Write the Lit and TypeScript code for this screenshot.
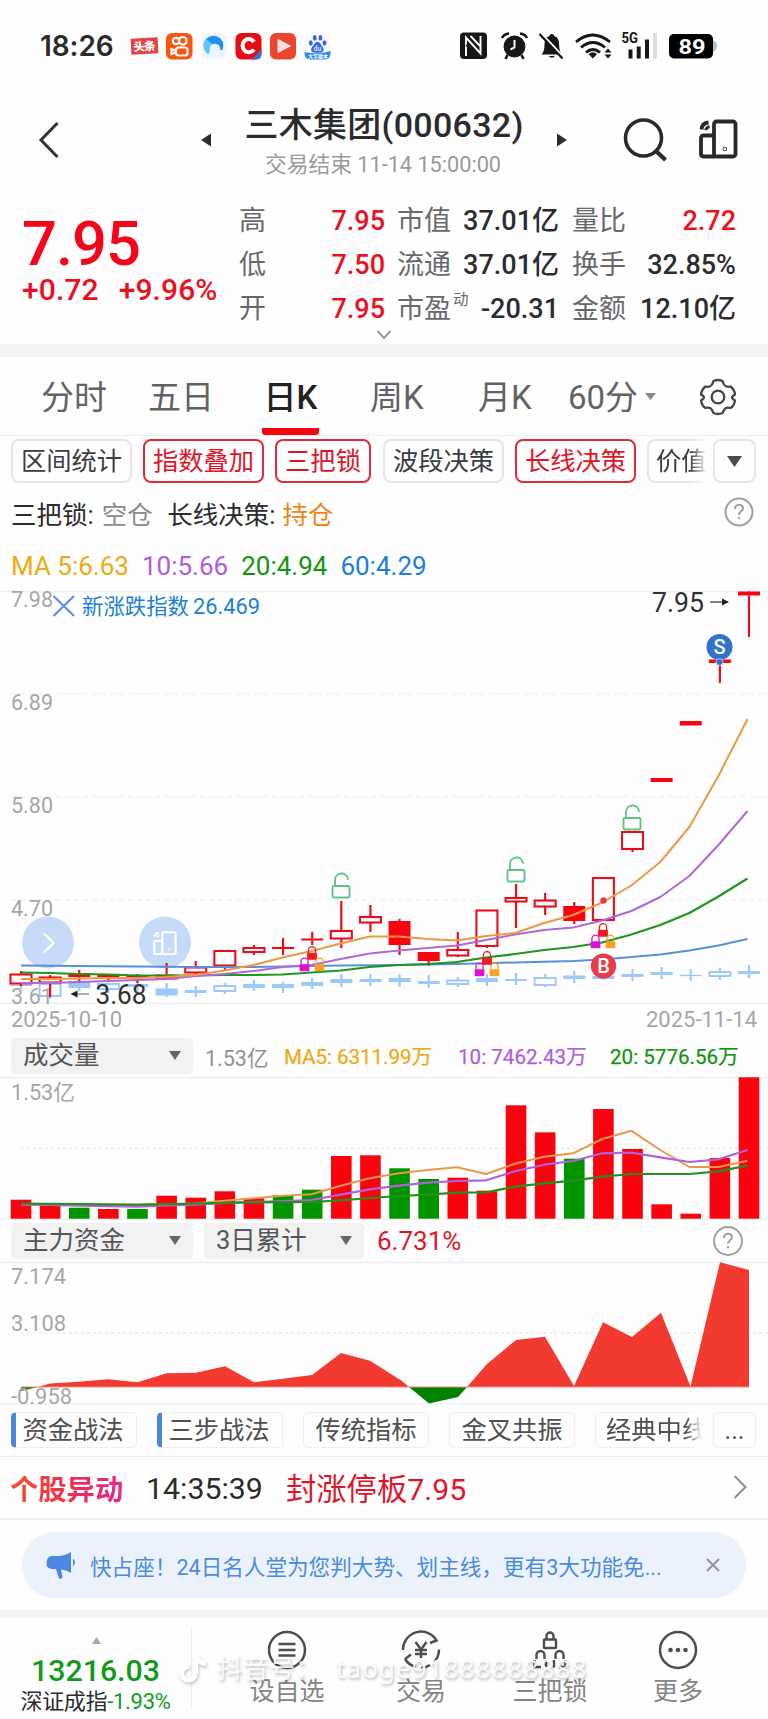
import { LitElement, html, svg, css } from "lit";
import { customElement } from "lit/decorators.js";

const RED = "#e60f1e";
const SOLID = "#f9030f";
const GREEN = "#009400";
const xAt = (i: number) => 21 + i * 29.12;

// [bodyTop, bodyBottom, wickTop, wickBottom, filled]
const candles: [number, number, number, number, number][] = [
  [974.5, 983.5, 971, 986, 0], [977.5, 982.5, 975, 997, 0], [973, 977, 970, 983, 1], [974.5, 977, 974, 982, 1],
  [975.5, 978, 974, 983, 1], [974.5, 979.5, 963, 979, 1], [967.5, 972.5, 961, 974, 0], [951, 965.5, 950, 971, 0],
  [948, 952, 945, 955, 0], [947, 949, 938, 955, 1], [938.5, 940.5, 932, 945, 1], [931, 938.5, 901, 948, 0],
  [917, 922.5, 905, 932, 0], [921, 945, 919, 955, 1], [952, 961, 952, 966, 1], [950, 955.5, 932, 957, 0],
  [910.5, 946, 910, 948, 0], [898, 901.5, 884, 928, 0], [900.5, 906.5, 893, 915, 0], [906, 921, 902, 924, 1],
  [878, 920, 877, 921, 0], [832, 849, 831, 852, 0], [778, 782, 778, 782, 1], [721, 725.5, 721, 725, 1],
  [659.5, 663, 659, 683, 1], [591.5, 595.5, 591, 637, 1],
];
const overlay: [number, number, number, number, number][] = [
  [985, 986, 984, 989, 1], [984, 996, 984, 999, 0], [981, 988, 980, 991, 1], [984, 989, 983, 993, 0],
  [984, 987, 981, 993, 1], [988.5, 995.5, 983, 997, 1], [990, 993, 986, 997, 1], [986, 991, 983, 994, 0],
  [984, 988, 980, 991, 1], [984, 988, 982, 993, 1], [982, 986, 978, 989, 1], [979, 983, 974, 987, 1],
  [979, 982, 974, 986, 1], [978, 982, 974, 987, 1], [981, 984, 975, 988, 1], [980.5, 984, 977, 987, 0],
  [978, 982, 974, 986, 1], [979, 981, 973, 985, 1], [978, 985, 974, 987, 0], [975.5, 979, 971, 983, 1],
  [976, 979, 975, 980, 1], [974, 977, 969, 981, 1], [972, 975, 967, 979, 1], [974.8, 976.2, 969, 981, 1],
  [972, 976, 968, 980, 0], [971, 974, 965, 978, 1],
];
const ma5 = [979, 979, 978.5, 978, 978, 977, 975, 970.5, 965, 957.5, 951, 943.5, 936.5, 936.5, 939, 940.5, 936, 933, 923, 915, 902.5, 885.5, 862, 827, 776, 719];
const ma10 = [983, 983, 982, 981, 980, 979, 976, 974, 971, 967, 965, 959, 953.5, 950.5, 948, 945.5, 940, 934.5, 930, 927.5, 920.5, 911, 897, 876, 845, 811];
const ma20 = [972.5, 973, 974, 974.5, 975.5, 975.5, 975.5, 975, 975, 974.5, 972.5, 970.5, 967, 965, 964, 962, 957.5, 954, 950, 947, 942.5, 934.5, 925, 913, 896.5, 878.5];
const ma60 = [965.5, 965.7, 966, 966.3, 966.5, 966.8, 967, 967, 967, 966.5, 966, 965.6, 965.3, 965, 964.5, 964, 963.2, 962.5, 961.8, 961, 959.5, 957, 954.5, 950.5, 945.5, 939];

// [top, rising]
const volumes: [number, number][] = [
  [1199.7, 1], [1205.7, 1], [1207.7, 0], [1209, 1], [1209, 0], [1195.7, 1], [1197.7, 1], [1191.3, 1], [1198.3, 1],
  [1195.3, 0], [1189.7, 0], [1156, 1], [1155.3, 1], [1168.3, 0], [1179, 0], [1177.7, 1], [1190.7, 1], [1105.3, 1],
  [1132.3, 1], [1158.7, 0], [1109, 1], [1149, 1], [1204.3, 1], [1213.7, 1], [1158, 1], [1077.3, 1],
];
const v5 = [1204.5, 1204.8, 1205, 1205, 1205, 1204.5, 1203.5, 1200.7, 1198.3, 1195.7, 1194.3, 1185.7, 1178.3, 1173.3, 1170, 1167.3, 1174, 1163.7, 1156.7, 1153.3, 1139, 1130.7, 1150, 1167, 1167, 1160.7];
const v10 = [1204.5, 1205, 1205.6, 1206.2, 1206.6, 1205.5, 1204.6, 1203, 1202, 1201, 1200, 1194.7, 1189.3, 1185.7, 1182.7, 1181, 1180.3, 1171.3, 1164.7, 1161, 1153.3, 1152.7, 1157.3, 1162, 1159.3, 1150];
const v20 = [1203.7, 1203.8, 1204, 1204.3, 1204.7, 1204.2, 1203.7, 1202.8, 1202.3, 1202.2, 1202, 1200.3, 1198, 1196, 1194.7, 1192.7, 1192.3, 1186.7, 1183.3, 1180.7, 1176.7, 1174, 1174, 1174, 1171.3, 1165.7];

const rise: [number, number][][] = [
  [[38, 1387], [50, 1383.5], [79, 1381.7], [108, 1379.3], [137.5, 1382.3], [166.6, 1373.3], [196, 1372.7], [225, 1366.3], [254, 1382.3], [283, 1378.7], [312, 1375], [341, 1353], [370, 1360.7], [402, 1381], [409, 1387]],
  [[467, 1387], [487, 1364], [516, 1340], [545, 1336.7], [574, 1386], [603, 1322.3], [632, 1337], [661, 1312.7], [690.5, 1386.5], [720, 1262.3], [749, 1270], [749, 1387]],
];
const fall: [number, number][][] = [
  [[21, 1387], [21, 1391], [38, 1387]],
  [[409, 1387], [429, 1403.5], [458, 1397], [467, 1387]],
];

const pts = (a: number[]) => a.map((y, i) => `${(xAt(i) - i * 0.06).toFixed(1)},${y}`).join(" ");
const poly = (a: [number, number][]) => a.map((p) => p.join(",")).join(" ");
const line = (a: number[], c: string, w = 2) =>
  svg`<polyline points=${pts(a)} fill="none" stroke=${c} stroke-width=${w} stroke-linejoin="round"/>`;

const bars = (data: [number, number, number, number, number][], stroke: string, fill: string, w = 2.1) =>
  data.map(([t, b, wt, wb, f], i) => {
    const x = xAt(i);
    return svg`
      ${wt < t ? svg`<path d="M${x} ${wt}V${t}" stroke=${stroke} stroke-width="2.2"/>` : ""}
      ${wb > b ? svg`<path d="M${x} ${b}V${wb}" stroke=${stroke} stroke-width="2.2"/>` : ""}
      ${f
        ? svg`<rect x=${x - 11} y=${t} width="22" height=${b - t} fill=${fill}/>`
        : svg`<rect x=${x - 10.5} y=${t} width="21" height=${b - t} fill="none" stroke=${stroke} stroke-width=${w}/>`}`;
  });

const unlock = (x: number, y: number) => svg`
  <g fill="none" stroke="#62c483" stroke-width="1.9" stroke-linecap="round">
    <rect x=${x - 8.5} y=${y + 13} width="17" height="11.5" rx="1.5"/>
    <path d=${`M${x - 6} ${y + 13}V${y + 7}C${x - 6} ${y - 1} ${x + 6} ${y - 2} ${x + 7} ${y + 6}`}/>
  </g>`;
const lock = (x: number, y: number, c: string) => svg`
  <path d=${`M${x - 3.6} ${y + 7}V${y + 4.2}a3.6 3.6 0 0 1 7.2 0V${y + 7}`} fill="none" stroke=${c} stroke-width="1.3"/>
  <rect x=${x - 4.9} y=${y + 6.8} width="9.8" height="7" rx="1" fill=${c}/>`;
const trio = (x: number, y: number) =>
  svg`${lock(x, y, "#f01822")}${lock(x - 7.5, y + 11.5, "#dd12cf")}${lock(x + 7.5, y + 11.5, "#f3a427")}`;
const label = (x: number, y: number, t: string, w: number, c = "#a6a6a6", size = 22) =>
  svg`<text x=${x} y=${y} textLength=${w} lengthAdjust="spacingAndGlyphs" font-size=${size} fill=${c}>${t}</text>`;
const phone = svg`
  <rect x="15" y="2" width="21.5" height="35" rx="2.5"/>
  <path d="M15 16H4.5Q2 16 2 18.5V34.500Q2 37 4.500 37H16"/>
  <path d="M2.500 10Q3 3.500 9.500 3"/><path d="M6.500 10.500Q7.500 8 10.500 7" stroke-width="3"/>
  <circle cx="25.800" cy="29.500" r=".4"/>`;

@customElement("app-root")
export class AppRoot extends LitElement {
  static styles = css`
    :host { display: block; position: relative; width: 768px; height: 1719px; overflow: hidden; background: #fefefe;
      color: #2b2b2e; font-family: Roboto, "Noto Sans CJK SC", sans-serif; }
    * { box-sizing: border-box; }
    svg { display: block; flex: none; overflow: visible; }
    svg text { font-family: Roboto, "Noto Sans CJK SC", sans-serif; }
    div, span { white-space: nowrap; }
    .status { height: 84px; padding: 7px 0 0 40px; display: flex; align-items: center; }
    .time { width: 90px; font: 600 28px Inter, sans-serif; letter-spacing: -0.1px; }
    .head { height: 100px; display: grid; grid-template-columns: 199px 370px 199px; align-items: start; }
    .back { margin: 37px 0 0 39px; }
    .title { display: grid; grid-template-columns: 14px 1fr 14px; justify-items: center; }
    .title .tri { margin-top: 49px; }
    .name { font-size: 34px; line-height: 42px; font-weight: 500; margin-top: 20px; text-align: center; letter-spacing: .3px; }
    .sub { font-size: 21.8px; line-height: 26px; color: #9a9a9a; text-align: center; margin: 6px 2px 0 0; letter-spacing: -.05px; }
    .tools { display: flex; padding: 34px 0 0 53px; gap: 33px; }
    .quote { height: 160px; display: grid; grid-template-columns: 239px 146px 12px 162px 13px 164px; }
    .last { padding: 26px 0 0 22px; color: #f4061a; }
    .price { font-size: 61.5px; line-height: 68px; font-weight: 500; letter-spacing: -1px; }
    .diff { display: flex; gap: 20px; font-size: 30px; line-height: 36px; font-weight: 500; margin-top: -6px; color: #ea1122; letter-spacing: .1px; }
    .stats { padding-top: 15px; display: grid; grid-template-rows: repeat(3, 44.2px); align-items: center; }
    .stats div { display: flex; justify-content: space-between; align-items: center; font-size: 27px; color: #68686c; line-height: 40px; }
    .stats b { font-weight: 500; color: #2c2c30; }
    .stats b.r { color: #ec1122; }
    .stats sup { font-size: 15.5px; line-height: 15px; align-self: flex-start; margin: 4px auto 0 2px; }
    .stats1 { grid-column: 2; } .stats2 { grid-column: 4; } .stats3 { grid-column: 6; }
    .more { height: 0; display: flex; justify-content: center; }
    .more svg { margin-top: -14px; }
    .band { height: 13px; background: #f2f2f2; }
    .tabs { height: 79px; border-bottom: 1px solid #efefef; display: grid;
      grid-template-columns: 107px 114px 108px 108px 90px 77px 54px 1fr; padding: 3px 0 0 41px; align-items: center;
      font-size: 33px; color: #626265; line-height: 40px; }
    .tabs .on { color: #222; font-weight: 500; align-self: stretch; display: flex; align-items: center; width: 57px; justify-content: center;
      border-bottom: 7px solid #f6040f; border-radius: 3px; padding-top: 7px; }
    .tabs svg { margin-top: -2px; }
    .chips { height: 50px; padding: 3px 0 0 11px; display: flex; position: relative; }
    .chip { height: 44px; border: 2px solid #e6e6e8; border-radius: 8px; width: 121px; margin-right: 11px; font-size: 25.3px; line-height: 42px;
      text-align: center; color: #3b3c44; flex: none; }
    .chip.hot { border-color: #e02a3a; color: #e0152a; }
    .chip.w3 { width: 96px; margin-right: 12px; }
    .chip.cut { width: 60px; overflow: hidden; text-align: left; padding-left: 7px; margin-right: 6px; border-right: 0; border-radius: 8px 0 0 8px;
      -webkit-mask-image: linear-gradient(90deg, #000 72%, transparent); mask-image: linear-gradient(90deg, #000 72%, transparent); }
    .chip.sq { width: 43px; margin: 0; display: grid; place-items: center; }
    .locks { height: 56px; display: flex; align-items: center; padding: 0 14px 4px 11px; font-size: 25.5px; }
    .locks .g { color: #8c8c8c; margin: 0 14.5px 0 8px; }
    .locks .o { color: #ee8620; margin-left: 7px; flex: 1; }
    .ma { height: 49px; display: flex; gap: 13px; align-items: center; padding: 0 0 1px 11px; font-size: 26px; }
    .y { color: #efa916; } .p { color: #b05dd8; } .gr { color: #129512; } .bl { color: #1c7de0; }
    .phead { height: 44px; display: flex; align-items: center; padding-left: 11px; font-size: 20.6px; }
    .sel { background: #f2f2f2; border-radius: 5px; height: 36px; width: 182px; padding: 0 12px; display: flex; align-items: center;
      justify-content: space-between; font-size: 25.5px; line-height: 32px; padding-bottom: 2px; color: #565658; margin-right: 12px; }
    .phead .gy { color: #929292; width: 79px; font-size: 21.5px; }
    .phead .y { width: 174px; letter-spacing: -.05px; } .phead .p { width: 152px; }
    .phead .y, .phead .p, .phead > .gr { padding-bottom: 3px; -webkit-text-stroke: .25px; }
    .phead.fund { height: 42px; font-size: 26px; }
    .sel.s2 { width: 160px; margin: 0 13px 0 -1px; }
    .fund .pc { color: #e0152a; flex: 1; }
    .fund svg.help { margin-right: 25px; }
    .bchips { height: 49px; padding: 4px 0 0 11px; display: flex; border-bottom: 1px solid #eee; }
    .bchip { height: 36px; width: 126px; margin-right: 20px; border: 1.5px solid #efeff0; border-radius: 5px; font-size: 25.3px; line-height: 36px;
      color: #4f4f52; text-align: center; flex: none; }
    .bchip.acc { border-left: 5px solid #4a86e0; padding-right: 6px; }
    .bchip.cut { width: 107px; margin-right: 11px; overflow: hidden; text-align: left; padding-left: 10px; border-right: 0;
      -webkit-mask-image: linear-gradient(90deg, #000 85%, transparent); mask-image: linear-gradient(90deg, #000 85%, transparent); }
    .bchip.sq { width: 43px; margin: 0; }
    .alert { height: 63px; border-bottom: 2px solid #f2f2f2; display: flex; align-items: center; font-size: 30.3px; padding: 0 21px 1px 10px; }
    .grad { font-weight: 700; font-size: 28.3px; width: 136px; background: linear-gradient(90deg, #f4502a, #ee2a5a 60%, #e6288e); background-size: 113px;
      -webkit-background-clip: text; background-clip: text; color: transparent; }
    .clock { width: 140px; padding-top: 2px; }
    .limit { color: #e0152a; flex: 1; }
    .wrap { height: 90px; padding: 12px 22px 12px 22px; }
    .banner { height: 66px; border-radius: 33px; background: #ebf2fb; display: flex; align-items: center; padding: 0 26px 0 24px;
      color: #4c8adb; font-size: 21.6px; }
    .banner span { flex: 1; margin-left: 13px; }
    .band2 { height: 8px; background: #f3f3f3; }
    .nav { height: 102px; display: grid; grid-template-columns: 192px 190px 78px 180px 76px; }
    .idx { padding-top: 9px; text-align: center; font-size: 22px; letter-spacing: -.3px; }
    .idx svg { margin: 0 auto; transform: translateX(1px); }
    .num { font-size: 30.3px; line-height: 36px; font-weight: 500; color: #129a1c; letter-spacing: 0; margin-top: 9px; }
    .idx .gr { color: #129a1c; }
    .idx .nm { line-height: 28px; margin-top: -1px; }
    .item { display: flex; flex-direction: column; align-items: center; padding-top: 12px; font-size: 25px; line-height: 34px; color: #858585; }
    .item svg { margin-bottom: 5px; }
    .split { border-right: 1.5px solid #eeeeee; height: 80px; margin-top: 10px; padding-top: 0; }
    .wm { position: absolute; left: 178px; top: 1651px; display: flex; align-items: center; color: rgba(255,255,255,.9);
      font-size: 26px; line-height: 34px; text-shadow: 1px 2px 3px rgba(0,0,0,.27); font-family: "Noto Sans", "Noto Sans CJK SC", sans-serif; }
    .wm svg { filter: drop-shadow(1px 2px 1.500px rgba(0,0,0,.22)); margin-right: 9px; }
    .wm .id { margin-left: 15px; letter-spacing: 1.1px; }
  `;

  private help(r = 13.5) {
    return html`<svg class="help" width="30" height="30" viewBox="0 0 30 30" fill="none" stroke="#a0a0a0" stroke-width="2">
      <circle cx="15" cy="15" r=${r}/><path d="M11 12c0-5.500 8-5.500 8-.7 0 3-4 3-4 6.500"/><path d="M15 20v2.300"/></svg>`;
  }
  private tri(w = 12, h = 9, c = "#666") {
    return html`<svg width=${w} height=${h} viewBox="0 0 12 9" preserveAspectRatio="none"><path d="M0 0H12L6 9Z" fill=${c}/></svg>`;
  }

  private statusIcons() {
    return html`<svg width="590" height="40" viewBox="130 26 590 40">
      <g transform="rotate(-3 144 46)"><rect x="131" y="38" width="27" height="16" fill="#e84046"/>
        <text x="133.500" y="50.500" font-size="11.500" font-weight="900" fill="#fff" textLength="22">头条</text></g>
      <rect x="166" y="33" width="26.500" height="26.500" rx="6" fill="#fb5411"/>
      <g fill="none" stroke="#fff" stroke-width="2.200"><circle cx="176" cy="41" r="3.200"/><circle cx="182.800" cy="40.800" r="3.800"/>
        <rect x="176" y="47.500" width="11.500" height="8" rx="2.500"/><path d="M171.500 49v5l4-1.500v-2Z"/></g>
      <rect x="202" y="33" width="25" height="26" rx="6" fill="#f0f5fc"/>
      <circle cx="213.500" cy="45.500" r="9.800" fill="#1e8ff0"/><path d="M206 39a9.800 9.800 0 0 0 4 15.800L214 45Z" fill="#62c4fa"/>
      <circle cx="215" cy="49" r="5.300" fill="#eef6fd"/><rect x="209" y="50" width="17" height="8.500" rx="4.200" fill="#eef6fd"/>
      <rect x="235.500" y="33" width="26" height="26.500" rx="6" fill="#e70b14"/><path d="M252 59.500l9.500-10.500V54q0 5.500-5.500 5.500Z" fill="#3b6fd0"/>
      <path d="M254 41.800A6.300 6.700 0 1 0 254 49.500" fill="none" stroke="#fff" stroke-width="4"/>
      <rect x="270" y="33" width="26" height="26.500" rx="6" fill="#e9452f"/><path d="M278 39.500v13l12.500-6.500Z" fill="#fde3dc" stroke="#fde3dc" stroke-linejoin="round"/>
      <rect x="304.500" y="33" width="26" height="26.500" rx="6" fill="#f6f9fe"/>
      <path d="M304.500 52q13 3 26-1v2q0 6.500-6 6.500h-14q-6 0-6-6.500Z" fill="#2a8cec"/>
      <g fill="#3a66e0"><ellipse cx="310.800" cy="43" rx="2" ry="2.700"/><ellipse cx="314.800" cy="37.800" rx="1.900" ry="2.800"/><ellipse cx="320.500" cy="37.800" rx="1.900" ry="2.800"/><ellipse cx="324.500" cy="43" rx="2" ry="2.700"/>
        <path d="M317.500 42c3 0 3.500 3 5 4.500s2 5.500-1.500 6c-2.500.4-4.500.4-7 0-3.500-.5-3.500-4-1.500-6s2-4.500 5-4.500Z"/></g>
      <text x="313.500" y="51" font-size="7" font-weight="700" fill="#cfe0fb">du</text>
      <text x="308" y="58.300" font-size="5" font-weight="700" fill="#fff">大字版本</text>

      <rect x="460" y="32.500" width="27" height="26.500" rx="4" fill="#161616"/>
      <path d="M466 56V37.500L480.500 53.500V36M470.500 36L481 47" fill="none" stroke="#fff" stroke-width="1.900"/>
      <path d="M466 45L477 56" fill="none" stroke="#161616" stroke-width="1.400"/>
      <g fill="#161616" stroke="#161616"><circle cx="514.500" cy="46.500" r="10.500"/>
        <path d="M502 38q2-4 7-4.500M527 38q-2-4-7-4.500M507.500 55l-2 4M521.500 55l2 4" fill="none" stroke-width="2.600"/></g>
      <path d="M514.500 40v7.500l-4 2" fill="none" stroke="#fff" stroke-width="2"/>
      <path d="M541.500 54.500q3-3 3-10 0-7.500 5-8.500 0-2 2.300-2t2.300 2q5 1 5 8.500 0 7 3 10Z" fill="#161616"/><path d="M548.500 56h6.500q-3 3.500-6.500 0Z" fill="#161616"/>
      <path d="M541.500 33.500L564.500 58" stroke="#fefefe" stroke-width="2"/><path d="M539.500 34L562.500 58.500" stroke="#161616" stroke-width="2.200"/>
      <g fill="none" stroke="#161616" stroke-width="2.800"><path d="M576 42q16.500-14 34 0"/><path d="M581 47.500q12-10 24 0"/><path d="M586 52.500q7-6 14 0"/></g>
      <path d="M588.500 54q4.300-3.500 8.600 0L592.800 58.500Z" fill="#161616"/><path d="M604.500 52.500h7l-3.500-4ZM604.500 54.500h7l-3.500 4Z" fill="#161616"/>
      <text x="621.500" y="43" font-size="14" font-weight="700" fill="#161616" textLength="16.500" lengthAdjust="spacingAndGlyphs">5G</text>
      <path d="M630.500 49.500v9M638.700 46.500v12M647 39.500v19" stroke="#161616" stroke-width="4"/><path d="M655 33v25.500" stroke="#dcdcdc" stroke-width="4"/>
      <rect x="669" y="34" width="44" height="24.500" rx="5" fill="#000"/><path d="M713 40.500q4 1 4 5.500t-4 6Z" fill="#bdbdbd"/>
      <text x="678.500" y="53.500" font-size="21" font-weight="700" fill="#fff" textLength="27" lengthAdjust="spacingAndGlyphs">89</text>
    </svg>`;
  }

  private kline() {
    return html`<svg width="768" height="443" viewBox="0 591 768 443">
      <g stroke="#f0f0f0" stroke-width="1.500"><path d="M0 591.500H768M0 1003.500H768"/><path d="M11 694H768M11 797H768M11 900H768" stroke-dasharray="5 4" stroke="#f2f2f2"/></g>
      ${bars(overlay, "#9cc8fa", "#9cc8fa", 2)}
      ${label(11, 607, "7.98", 42)}${label(11, 709.5, "6.89", 42)}${label(11, 812.500, "5.80", 42)}${label(11, 915.500, "4.70", 42)}${label(11, 1003.500, "3.61", 42)}
      <circle cx="48" cy="942.500" r="26" fill="#c5dbf7"/><path d="M44 933.500l9.500 9.500-9.500 9.500" fill="none" stroke="#fff" stroke-width="2.400"/>
      <circle cx="165" cy="942.500" r="26" fill="#c5dbf7"/>
      <g transform="translate(153 931) scale(.62)" fill="none" stroke="#fff" stroke-width="3.400">${phone}</g>
      ${bars(candles, RED, SOLID)}
      ${line(ma60, "#5a90d8")}${line(ma20, "#1f961f", 2.2)}${line(ma10, "#b068d8")}${line(ma5, "#ea9a45")}
      ${unlock(341, 873)}${unlock(516, 857)}${unlock(632, 805)}
      ${trio(312, 946)}${trio(487, 951)}${trio(603, 923)}
      <circle cx="603.500" cy="900.500" r="3.200" fill="#e8374a"/>
      <circle cx="603.500" cy="966" r="12.600" fill="#e83a4a"/><text x="603.500" y="973" font-size="20" font-weight="500" fill="#fff" text-anchor="middle">B</text>
      <circle cx="719.500" cy="647" r="13" fill="#3472d0"/><text x="719.500" y="654" font-size="20" font-weight="500" fill="#fff" text-anchor="middle">S</text>
      <circle cx="719.500" cy="662" r="3.500" fill="#3472d0" stroke="#dbe6f8" stroke-width=".8"/>
      <path d="M53.500 596L74 616M74 596L53.500 616" stroke="#5f8fe0" stroke-width="2.200"/>
      ${label(82, 613.500, "新涨跌指数", 107, "#1f7fd6", 21.5)}${label(193, 613.500, "26.469", 67, "#1f7fd6", 22)}
      ${label(652, 612, "7.95", 52, "#303030", 27)}
      <path d="M710 602h15" stroke="#303030" stroke-width="1.200"/><path d="M722 598.500l7 3.500-7 3.500Z" fill="#222"/>
      ${label(95.500, 1004, "3.68", 51, "#303030", 27)}
      <path d="M74 994h15" stroke="#777" stroke-width="1.200"/><path d="M77.500 990.500l-7 3.500 7 3.500Z" fill="#222"/>
      ${label(11, 1027, "2025-10-10", 111)}${label(646, 1027, "2025-11-14", 111)}
    </svg>`;
  }

  private volume() {
    return html`<svg width="768" height="142" viewBox="0 1078 768 142">
      <path d="M0 1077.500H768M0 1219H768" stroke="#efefef" stroke-width="1.500"/>
      <path d="M21 1148.500H768" stroke="#ebebeb" stroke-width="1.500" stroke-dasharray="3 3"/>
      ${label(11, 1099.500, "1.53亿", 64)}
      ${volumes.map(([t, up], i) => svg`<rect x=${xAt(i) - 10.300} y=${t} width="20.600" height=${1218.700 - t} fill=${up ? SOLID : GREEN}/>`)}
      ${line(v5, "#e8984a")}${line(v10, "#b062da", 2.2)}${line(v20, "#26901f", 2.2)}
    </svg>`;
  }

  private funds() {
    return html`<svg width="768" height="146" viewBox="0 1262 768 146">
      <path d="M0 1262.500H768M0 1404H768" stroke="#efefef" stroke-width="1.300"/>
      <path d="M21 1333H768" stroke="#ebebeb" stroke-width="1.500" stroke-dasharray="3 3"/>
      ${fall.map((a) => svg`<polygon points=${poly(a)} fill="#008200"/>`)}
      ${rise.map((a) => svg`<polygon points=${poly(a)} fill="#f33a31"/>`)}
      <path d="M21 1387H749" stroke="#e98a80" stroke-width="1"/>
      ${label(11, 1284, "7.174", 55)}${label(11, 1330.500, "3.108", 55)}${label(11, 1404, "-0.958", 61)}
    </svg>`;
  }

  render() {
    return html`
      <div class="status"><div class="time">18:26</div>${this.statusIcons()}</div>
      <div class="head">
        <svg class="back" width="20" height="38" viewBox="0 0 20 38"><path d="M18.500 2L2 19 18.500 36" fill="none" stroke="#333" stroke-width="3"/></svg>
        <div class="title">
          <svg class="tri" width="10" height="14" viewBox="0 0 10 14"><path d="M10 .5v13L0 7Z" fill="#2b2b2e"/></svg>
          <div><div class="name">三木集团(000632)</div><div class="sub">交易结束 11-14 15:00:00</div></div>
          <svg class="tri" width="10" height="14" viewBox="0 0 10 14"><path d="M0 .5v13L10 7Z" fill="#2b2b2e"/></svg>
        </div>
        <div class="tools">
          <svg width="44" height="44" viewBox="0 0 44 44" fill="none" stroke="#29292c" stroke-width="3.600"><circle cx="21.500" cy="20" r="18"/><path d="M34 33l9.500 9" stroke-width="4.200"/></svg>
          <svg width="40" height="40" viewBox="0 -1.500 40 40" fill="none" stroke="#29292c" stroke-width="3.800">${phone}</svg>
        </div>
      </div>
      <div class="quote">
        <div class="last"><div class="price">7.95</div><div class="diff"><span>+0.72</span><span>+9.96%</span></div></div>
        <div class="stats stats1"><div>高<b class="r">7.95</b></div><div>低<b class="r">7.50</b></div><div>开<b class="r">7.95</b></div></div>
        <div class="stats stats2"><div>市值<b>37.01亿</b></div><div>流通<b>37.01亿</b></div><div>市盈<sup>动</sup><b>-20.31</b></div></div>
        <div class="stats stats3"><div>量比<b class="r">2.72</b></div><div>换手<b>32.85%</b></div><div>金额<b>12.10亿</b></div></div>
      </div>
      <div class="more"><svg width="14" height="9" viewBox="0 0 14 9"><path d="M.5 1L7 8l6.500-7" fill="none" stroke="#888" stroke-width="1.800"/></svg></div>
      <div class="band"></div>
      <div class="tabs"><span>分时</span><span>五日</span><span class="on">日K</span><span>周K</span><span>月K</span><span>60分</span>
        <span>${this.tri(11, 7, "#888")}</span>
        <svg width="38" height="38" viewBox="0 0 38 38" fill="none" stroke="#454548" stroke-width="2.300" stroke-linejoin="round">
          <path d="M14.500 3Q19 1 23.500 3C25 8.500 27.500 9.500 31.500 8.500Q35.500 11.500 36 16.500C32 19 32 20 36 22.500Q35 28 31.500 30C27 29 25.500 30 23.500 35Q19 37 14.500 35C12.500 30 11 29 6.500 30Q3 28 2 22.500C6 20 6 19 2 16.500Q2.500 11.500 6.500 8.500C10.500 9.500 13 8.500 14.500 3Z"/><circle cx="19" cy="19" r="6.300"/></svg>
      </div>
      <div class="chips">
        <div class="chip">区间统计</div><div class="chip hot">指数叠加</div><div class="chip hot w3">三把锁</div><div class="chip">波段决策</div>
        <div class="chip hot">长线决策</div><div class="chip cut">价值</div><div class="chip sq">${this.tri(15, 11, "#4a4b52")}</div>
      </div>
      <div class="locks"><span>三把锁:</span><span class="g">空仓</span><span>长线决策:</span><span class="o">持仓</span>${this.help()}</div>
      <div class="ma"><span class="y">MA 5:6.63</span><span class="p">10:5.66</span><span class="gr">20:4.94</span><span class="bl">60:4.29</span></div>
      ${this.kline()}
      <div class="phead"><div class="sel">成交量${this.tri()}</div><span class="gy">1.53亿</span><span class="y">MA5: 6311.99万</span><span class="p">10: 7462.43万</span><span class="gr">20: 5776.56万</span></div>
      ${this.volume()}
      <div class="phead fund"><div class="sel">主力资金${this.tri()}</div><div class="sel s2">3日累计${this.tri()}</div><span class="pc">6.731%</span>${this.help(14)}</div>
      ${this.funds()}
      <div class="bchips"><div class="bchip acc">资金战法</div><div class="bchip acc">三步战法</div><div class="bchip">传统指标</div><div class="bchip">金叉共振</div><div class="bchip cut">经典中线</div><div class="bchip sq">...</div></div>
      <div class="alert"><span class="grad">个股异动</span><span class="clock">14:35:39</span><span class="limit">封涨停板7.95</span>
        <svg width="14" height="24" viewBox="0 0 14 24"><path d="M1.500 1l11 11-11 11" fill="none" stroke="#8e8e8e" stroke-width="2"/></svg></div>
      <div class="wrap"><div class="banner">
        <svg width="31" height="27" viewBox="0 0 31 27"><path d="M6 4H13Q20 3.500 25 0V21Q20 17.500 15 17.500L16.500 25Q16 27.500 13 26.500L10 17Q0 18 .5 11T6 4ZM27 6.500Q31 10 27 14.500Z" fill="#4c88e2"/></svg>
        <span>快占座！24日名人堂为您判大势、划主线，更有3大功能免...</span>
        <svg width="14" height="14" viewBox="0 0 14 14"><path d="M1 1l12 12M13 1L1 13" stroke="#8e9198" stroke-width="1.800"/></svg></div></div>
      <div class="band2"></div>
      <div class="nav">
        <div class="split"><div class="idx"><svg width="9" height="7" viewBox="0 0 9 7"><path d="M0 7h9L4.500 0Z" fill="#a8a8a8"/></svg>
          <div class="num">13216.03</div><div class="nm">深证成指<span class="gr">-1.93%</span></div></div></div>
        <div class="item"><svg width="40" height="40" viewBox="0 0 40 40" fill="none" stroke="#4d4e55" stroke-width="2.500"><circle cx="20" cy="20" r="18"/><path d="M11.500 14h17M11.500 20h17M11.500 25.500h17"/></svg>设自选</div>
        <div class="item"><svg width="40" height="40" viewBox="0 0 40 40" fill="none" stroke="#4d4e55" stroke-width="2.500"><path d="M2 20A18 18 0 0 1 35.500 10.500L29 13M4 29l6-4.500M4 29A18 18 0 0 0 15 37M20 38a18 18 0 0 0 9-3M33 32a18 18 0 0 0 5-12.500"/><path d="M14.500 12l5.500 7.500L25.500 12M20 19.500V28M14 20h12M14 24h12"/></svg>交易</div>
        <div class="item"><svg width="40" height="40" viewBox="0 0 40 40" fill="none" stroke="#4d4e55" stroke-width="2.400"><rect x="14" y="9.500" width="12" height="8.500" rx=".5"/><path d="M16.500 9.500V6a3.500 3.500 0 0 1 7 0V9.500M6.500 29v-4a4 4 0 0 1 8 0V29M25.500 29v-4a4 4 0 0 1 8 0V29M4.500 30v7H11M16 30v7.500M24 30v7.500M35.500 30v7H29"/></svg>三把锁</div>
        <div class="item"><svg width="40" height="40" viewBox="0 0 40 40" fill="none" stroke="#4d4e55" stroke-width="2.500"><circle cx="20" cy="20" r="18"/><g fill="#4d4e55" stroke="none"><circle cx="12.500" cy="20" r="2.300"/><circle cx="20" cy="20" r="2.300"/><circle cx="27.500" cy="20" r="2.300"/></g></svg>更多</div>
      </div>
      <div class="wm"><svg width="30" height="30" viewBox="0 0 30 30"><path d="M15 1h5q1 6 8 7v5q-5 0-8-3v10a9.500 9.500 0 1 1-9-9.500v5.200a4.500 4.500 0 1 0 4 4.300Z" fill="#fff"/></svg><span>抖音号：</span><span class="id">taoge91888888888</span></div>
    `;
  }
}
